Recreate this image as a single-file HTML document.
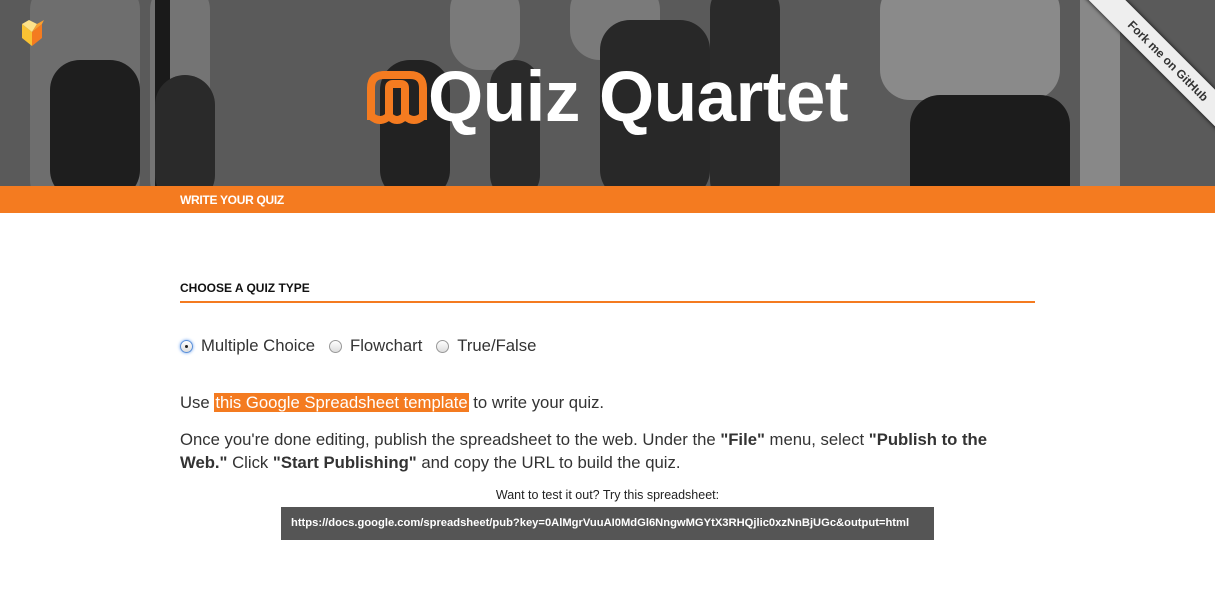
<!DOCTYPE html>
<html><head><meta charset="utf-8"><style>
*{margin:0;padding:0;box-sizing:border-box}
body{width:1215px;height:604px;background:#fff;font-family:"Liberation Sans",sans-serif;color:#333;overflow:hidden;position:relative}
.hdr{position:absolute;left:0;top:0;width:1215px;height:186px;background:#5a5a5a;overflow:hidden}
.fig{position:absolute;border-radius:30px}
.bar{position:absolute;left:0;top:186px;width:1215px;height:27px;background:#f47b20}
.bar span{position:absolute;left:180px;top:7px;color:#fff;font-weight:bold;font-size:12px;letter-spacing:-0.3px}
.title{position:absolute;left:428px;top:58px;color:#fff;font-weight:bold;font-size:71px;letter-spacing:-0.5px;line-height:80px}
h3{position:absolute;left:180px;top:281px;font-size:12px;font-weight:bold;color:#111}
.line{position:absolute;left:180px;top:301px;width:855px;height:2px;background:#f47b20}
.radios{position:absolute;left:180px;top:336px;font-size:16.7px;color:#333}
.r{display:inline-block;width:13px;height:13px;border-radius:50%;border:1px solid #999;background:linear-gradient(#fff,#ddd);vertical-align:-2px;margin-right:8px;position:relative}
.r.on{border-color:#5a8fd8;box-shadow:0 0 3px #6aa0ee}
.r.on:after{content:"";position:absolute;left:4px;top:4px;width:3px;height:3px;border-radius:50%;background:#222}
p{position:absolute;left:180px;font-size:16.7px;line-height:23px;width:840px}
.hl{background:#f47b20;color:#fff;padding:0 1px}
.small{position:absolute;left:0;width:1215px;text-align:center;top:488px;font-size:12.5px;color:#222}
.ta{position:absolute;left:281px;top:507px;width:653px;height:33px;background:#555;color:#fff;font-size:11.2px;font-weight:bold;padding:10px 0 0 10px}
.gh{position:absolute;left:1058px;top:48px;width:220px;height:26px;background:#eee;transform:rotate(45deg);text-align:center;font-size:12px;font-weight:bold;color:#333;line-height:26px;box-shadow:0 0 4px #000}
</style></head><body>
<div class="hdr">
<div class="fig" style="left:30px;top:-20px;width:110px;height:230px;background:#6e6e6e"></div>
<div class="fig" style="left:50px;top:60px;width:90px;height:140px;background:#1e1e1e"></div>
<div class="fig" style="left:150px;top:-20px;width:60px;height:230px;background:#747474"></div>
<div class="fig" style="left:155px;top:-20px;width:15px;height:230px;background:#1a1a1a"></div>
<div class="fig" style="left:155px;top:75px;width:60px;height:130px;background:#2a2a2a"></div>
<div class="fig" style="left:380px;top:60px;width:70px;height:140px;background:#222"></div>
<div class="fig" style="left:450px;top:-20px;width:70px;height:90px;background:#7a7a7a"></div>
<div class="fig" style="left:490px;top:60px;width:50px;height:140px;background:#2a2a2a"></div>
<div class="fig" style="left:570px;top:-20px;width:90px;height:80px;background:#7a7a7a"></div>
<div class="fig" style="left:600px;top:20px;width:110px;height:180px;background:#282828"></div>
<div class="fig" style="left:710px;top:-20px;width:70px;height:230px;background:#2a2a2a"></div>
<div class="fig" style="left:880px;top:-20px;width:180px;height:120px;background:#8a8a8a"></div>
<div class="fig" style="left:910px;top:95px;width:160px;height:120px;background:#1c1c1c"></div>
<div class="fig" style="left:1080px;top:-20px;width:40px;height:230px;background:#888"></div>
<svg style="position:absolute;left:20px;top:20px" width="34" height="28"><polygon points="2,4 12,12 12,26 2,18" fill="#f9c233"/><polygon points="12,12 22,4 22,18 12,26" fill="#f47b20"/><polygon points="2,4 9,0 17,4 12,12" fill="#fde28a"/><polygon points="17,4 24,0 22,4 12,12" fill="#f9a030"/></svg>
<svg style="position:absolute;left:366px;top:70px" width="62" height="56" viewBox="0 0 62 56"><path d="M5,50 V18 Q5,5 18,5 H44 Q57,5 57,18 V50 M23,48 V18 Q23,14 27,14 H35 Q39,14 39,18 V48 M5,46 Q14,54 23,46 Q31,54 39,46 Q48,54 57,46" fill="none" stroke="#f47b20" stroke-width="8"/></svg>
<div class="title">Quiz Quartet</div>
<div class="gh">Fork me on GitHub</div>
</div>
<div class="bar"><span>WRITE YOUR QUIZ</span></div>
<h3>CHOOSE A QUIZ TYPE</h3>
<div class="line"></div>
<div class="radios"><span class="r on"></span>Multiple Choice &nbsp;&nbsp;<span class="r"></span>Flowchart &nbsp;&nbsp;<span class="r"></span>True/False</div>
<p style="top:391px">Use <span class="hl">this Google Spreadsheet template</span> to write your quiz.</p>
<p style="top:428px">Once you're done editing, publish the spreadsheet to the web. Under the <b>"File"</b> menu, select <b>"Publish to the Web."</b> Click <b>"Start Publishing"</b> and copy the URL to build the quiz.</p>
<div class="small">Want to test it out? Try this spreadsheet:</div>
<div class="ta">https://docs.google.com/spreadsheet/pub?key=0AlMgrVuuAI0MdGl6NngwMGYtX3RHQjlic0xzNnBjUGc&amp;output=html</div>
</body></html>
